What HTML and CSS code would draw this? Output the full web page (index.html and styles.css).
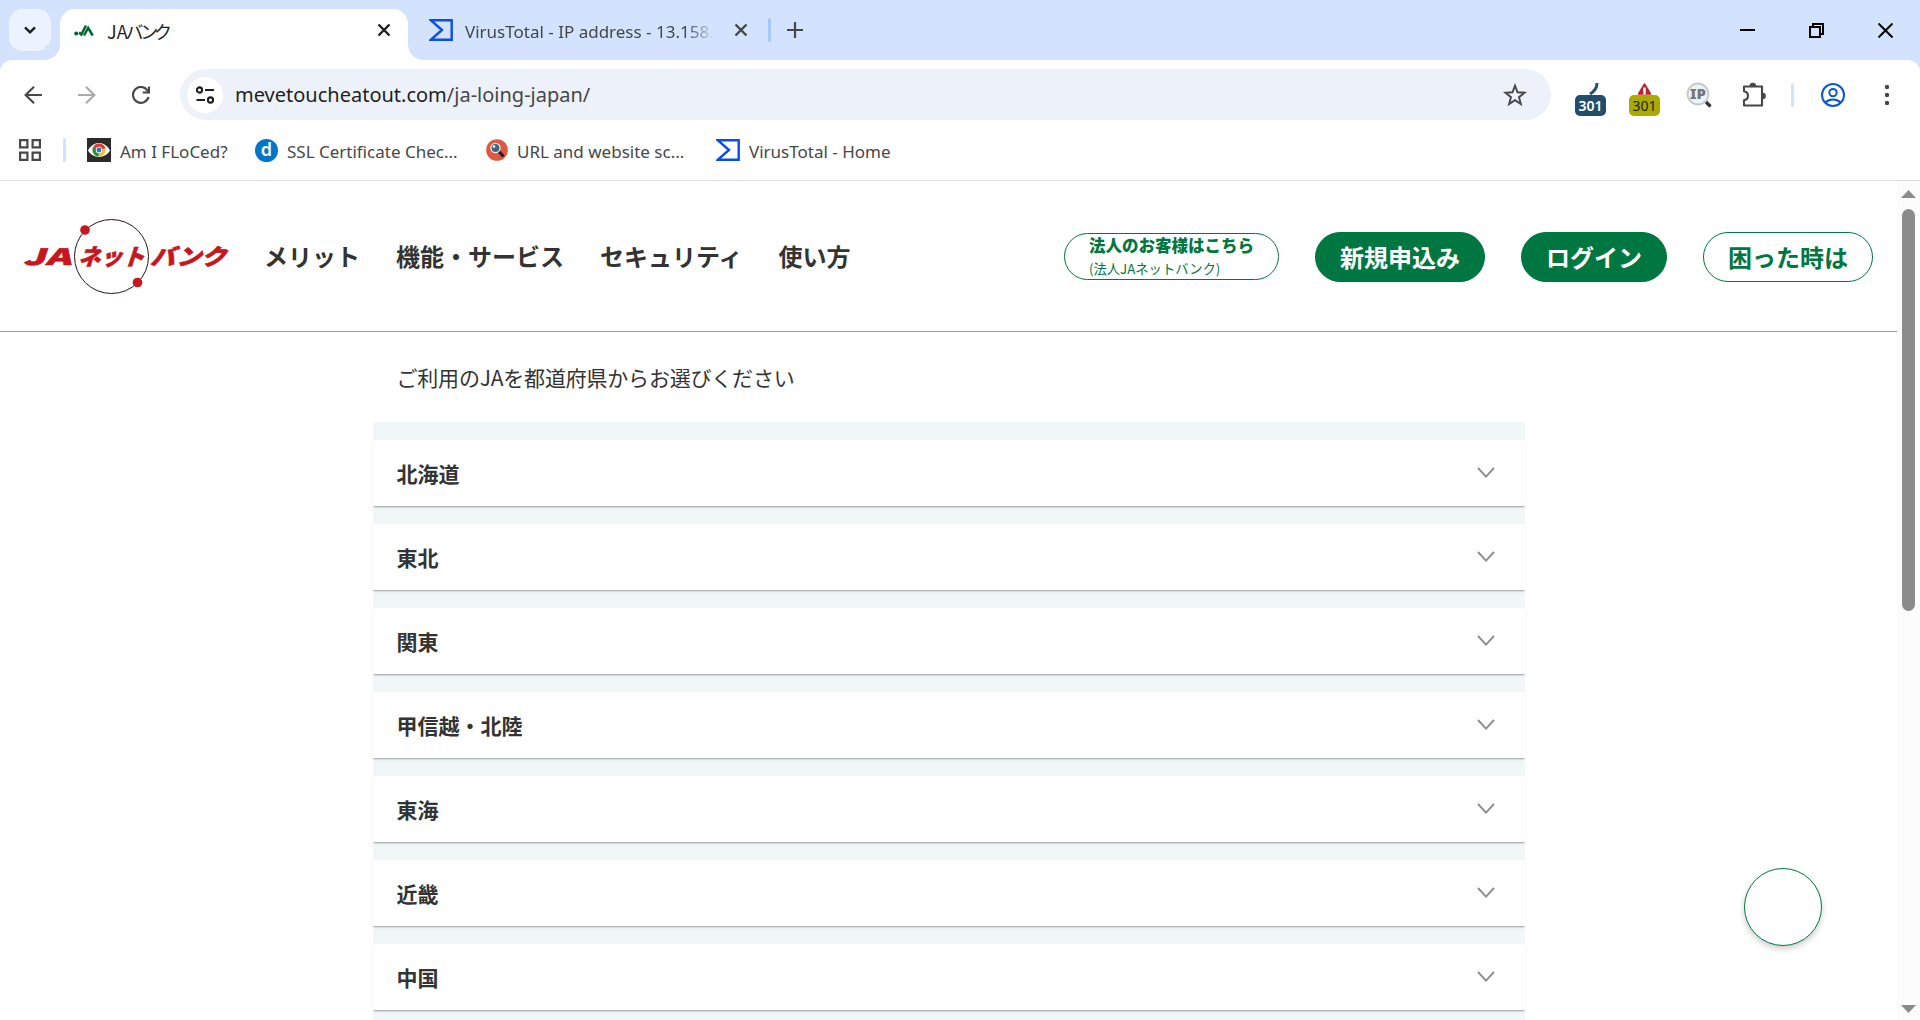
FILE: index.html
```html
<!DOCTYPE html>
<html lang="ja">
<head>
    <meta charset="UTF-8">
    <meta name="viewport" content="width=device-width, initial-scale=1.0">
    <title>JAバンク</title>
    <link rel="stylesheet" href="styles.css">
</head>
<body>
    <!-- icons used more than once -->
    <svg class="defs" width="0" height="0">
        <symbol id="vt" viewBox="0 0 24 22">
            <path d="M2 1.3h20.7v19.4H2L13 11z" fill="none" stroke="#0b4dea" stroke-width="2.4"/>
        </symbol>
        <symbol id="chevron" viewBox="0 0 18 11">
            <path d="M1 1l8 8.6L17 1" fill="none" stroke="#8e8e8e" stroke-width="1.9"/>
        </symbol>
    </svg>

    <div class="tabstrip">
        <div class="tab-search">
            <svg width="12" height="8" viewBox="0 0 12 8"><path d="M1 1.3l5 5 5-5" fill="none" stroke="#1f1f1f" stroke-width="2.4"/></svg>
        </div>
        <div class="tab active">
            <svg class="favicon-ja" width="20" height="14" viewBox="0 0 20 14">
                <circle cx="2.2" cy="10.5" r="2" fill="#00662f"/>
                <path d="M5 9.5l2.3 2L12 2.5M10 12.5L14.2 5l4.5 7.5" fill="none" stroke="#00662f" stroke-width="2.5"/>
            </svg>
            <span class="tab-title title-ja">JA<span class="kana">バンク</span></span>
            <svg class="tab-close" width="14" height="14" viewBox="0 0 14 14"><path d="M1.5 1.5l11 11m0-11l-11 11" stroke="#1f1f1f" stroke-width="2.4"/></svg>
        </div>
        <div class="tab">
            <svg class="favicon-vt" width="24" height="22"><use href="#vt"/></svg>
            <span class="tab-title title-vt">VirusTotal - IP address - 13.158.</span>
            <svg class="tab-close" width="14" height="14" viewBox="0 0 14 14"><path d="M1.5 1.5l11 11m0-11l-11 11" stroke="#444746" stroke-width="2.4"/></svg>
        </div>
        <div class="divider tab-divider"></div>
        <svg class="new-tab" width="16" height="16" viewBox="0 0 16 16"><path d="M8 0v16M0 8h16" stroke="#444746" stroke-width="2.2"/></svg>
        <div class="window-controls">
            <svg width="15" height="15" viewBox="0 0 15 15"><path d="M0 7h15" stroke="#000" stroke-width="2"/></svg>
            <svg width="15" height="15" viewBox="0 0 15 15"><path d="M1 4h10v10H1zM4 4V1h10v10h-3" fill="none" stroke="#000" stroke-width="2"/></svg>
            <svg width="15" height="15" viewBox="0 0 15 15"><path d="M.5 .5l14 14m0-14l-14 14" stroke="#000" stroke-width="2"/></svg>
        </div>
    </div>

    <div class="toolbar">
        <svg class="back" width="18" height="18" viewBox="0 0 18 18"><path d="M18 9H2M10 .8L1.6 9l8.4 8.2" fill="none" stroke="#474747" stroke-width="2.1"/></svg>
        <svg class="forward" width="18" height="18" viewBox="0 0 18 18"><path d="M0 9h16M8 .8L16.4 9 8 17.2" fill="none" stroke="#aaa" stroke-width="2.1"/></svg>
        <svg class="reload" width="18" height="18" viewBox="0 0 18 18"><path d="M16.5 11A7.9 7.9 0 1 1 15.5 4.5L17 6.5M17 .5v6h-6.3" fill="none" stroke="#474747" stroke-width="2.2"/></svg>
        <div class="omnibox">
            <div class="site-info">
                <svg width="20" height="18" viewBox="0 0 20 18" fill="none" stroke="#1f1f1f" stroke-width="2.1"><circle cx="4.5" cy="4" r="2.6"/><path d="M10 4h9M1.500 14h8.500"/><circle cx="15.5" cy="14" r="2.6"/></svg>
            </div>
            <span class="url">mevetoucheatout.com<span class="path">/ja-loing-japan/</span></span>
            <svg class="star" width="24" height="24" viewBox="0 0 24 24"><path d="M12 2.700l2.500 6.600 7 .4-5.500 4.500 1.900 6.900-5.900-3.900-5.900 3.900 1.900-6.900L2.500 9.700l7-.4z" fill="none" stroke="#474747" stroke-width="1.9"/></svg>
        </div>
        <div class="ext ext-blue">
            <svg width="31" height="13" viewBox="0 0 31 13"><path d="M22 1c0 5-2 8-7 11" fill="none" stroke="#27506b" stroke-width="3"/></svg>
            <span>301</span>
        </div>
        <div class="ext ext-olive">
            <svg width="31" height="13" viewBox="0 0 31 13"><path d="M15.5 2L9.5 12h12z" fill="#c4202f" stroke="#c4202f" stroke-width="1.5" stroke-linejoin="round"/><path d="M15.5 5.5v7" stroke="#fff" stroke-width="2.4"/></svg>
            <span>301</span>
        </div>
        <svg class="ext-ip" width="26" height="26" viewBox="0 0 26 26">
            <circle cx="12" cy="12" r="10.5" fill="#eef3f5" stroke="#c0c9cd" stroke-width="1.8"/>
            <path d="M20 20l4.500 4.500" stroke="#333" stroke-width="3.2"/>
            <text x="4" y="17" class="ip-text" textLength="16" lengthAdjust="spacingAndGlyphs">IP</text>
        </svg>
        <svg class="puzzle" width="26" height="26" viewBox="0 0 26 26">
            <path d="M3 4.500h18v19H3v-5.200c5.300-1 5.300-8.100 0-9.100z" fill="none" stroke="#474747" stroke-width="2.1" stroke-linejoin="round"/>
            <path d="M8.500 4a3.300 3.300 0 0 1 6.600 0zM21.500 10.700a3.300 3.300 0 0 1 0 6.600z" fill="#474747"/>
        </svg>
        <div class="divider toolbar-divider"></div>
        <svg class="profile" width="24" height="24" viewBox="0 0 24 24" fill="none" stroke="#0b57d0" stroke-width="2"><circle cx="12" cy="12" r="11"/><circle cx="12" cy="9.6" r="3.7"/><path d="M4.500 19.500c4-4 11-4 15 0"/></svg>
        <svg class="menu" width="6" height="22" viewBox="0 0 6 22" fill="#474747"><circle cx="3" cy="3" r="2.2"/><circle cx="3" cy="11" r="2.2"/><circle cx="3" cy="19" r="2.2"/></svg>
    </div>

    <div class="bookmarks">
        <svg class="apps" width="22" height="22" viewBox="0 0 22 22" fill="none" stroke="#474747" stroke-width="2.2"><path d="M1.100 1.100h7.300v7.300H1.100zM13.600 1.100h7.300v7.300h-7.300zM1.100 13.600h7.300v7.300H1.100zM13.600 13.600h7.300v7.300h-7.300z"/></svg>
        <div class="divider bookmark-divider"></div>
        <div class="bookmark floc">
            <svg width="24" height="24" viewBox="0 0 24 24">
                <rect width="24" height="24" fill="#2b2b2b"/>
                <path d="M1 12.500C6 2.500 18 2.500 23 12.500 18 21 6 21 1 12.500z" fill="#fff"/>
                <circle cx="12" cy="12" r="6.5" fill="#fbc116"/>
                <path d="M12 12L6.400 8.700a6.500 6.500 0 0 1 11.900 1.500z" fill="#e33b2e"/>
                <path d="M12 12L6.400 8.700a6.500 6.500 0 0 0 5.100 9.800z" fill="#229342"/>
                <circle cx="12" cy="12" r="3.2" fill="#fff"/><circle cx="12" cy="12" r="2.4" fill="#1a73e8"/>
            </svg>
            <span>Am I FLoCed?</span>
        </div>
        <div class="bookmark ssl">
            <div class="icon-d">d</div>
            <span>SSL Certificate Chec...</span>
        </div>
        <div class="bookmark scan">
            <svg width="22" height="22" viewBox="0 0 22 22"><circle cx="11" cy="11" r="10.8" fill="#e2573f"/><path d="M12.500 12l5 5.500" stroke="#222" stroke-width="3"/><circle cx="9.5" cy="9" r="4.6" fill="#3f6480" stroke="#dfe9ee" stroke-width="1.4"/><circle cx="8" cy="7.5" r="1.3" fill="#fff"/></svg>
            <span>URL and website sc...</span>
        </div>
        <div class="bookmark vthome">
            <svg width="24" height="22"><use href="#vt"/></svg>
            <span>VirusTotal - Home</span>
        </div>
    </div>

    <div class="viewport">
        <div class="page">
            <header>
                <svg class="logo" width="205" height="76" viewBox="0 0 205 76">
                    <circle cx="87.5" cy="38.5" r="37" fill="none" stroke="#231815" stroke-width="1"/>
                    <circle cx="61" cy="12" r="4.8" fill="#c7161d"/>
                    <circle cx="113.5" cy="64.5" r="4.8" fill="#c7161d"/>
                    <g class="logo-text" transform="translate(0 46.5) skewX(-18)">
                        <text x="-1" y="0" textLength="48" lengthAdjust="spacingAndGlyphs">JA</text>
                        <text x="54" y="0" textLength="66" lengthAdjust="spacingAndGlyphs">ネット</text>
                        <text x="126" y="0" textLength="76" lengthAdjust="spacingAndGlyphs">バンク</text>
                    </g>
                </svg>
                <nav>
                    <a>メリット</a>
                    <a>機能・サービス</a>
                    <a>セキュリティ</a>
                    <a>使い方</a>
                </nav>
                <div class="header-buttons">
                    <a class="btn corporate"><b>法人のお客様はこちら</b><span>(法人JAネットバンク)</span></a>
                    <a class="btn filled">新規申込み</a>
                    <a class="btn filled">ログイン</a>
                    <a class="btn">困った時は</a>
                </div>
            </header>
            <main>
                <p class="lead">ご利用のJAを都道府県からお選びください</p>
                <div class="regions">
                    <div class="region">北海道<svg width="18" height="11"><use href="#chevron"/></svg></div>
                    <div class="region">東北<svg width="18" height="11"><use href="#chevron"/></svg></div>
                    <div class="region">関東<svg width="18" height="11"><use href="#chevron"/></svg></div>
                    <div class="region">甲信越・北陸<svg width="18" height="11"><use href="#chevron"/></svg></div>
                    <div class="region">東海<svg width="18" height="11"><use href="#chevron"/></svg></div>
                    <div class="region">近畿<svg width="18" height="11"><use href="#chevron"/></svg></div>
                    <div class="region">中国<svg width="18" height="11"><use href="#chevron"/></svg></div>
                </div>
            </main>
            <div class="page-top"></div>
        </div>
        <div class="scrollbar">
            <svg width="15" height="8" viewBox="0 0 15 8"><path d="M7.500 0L15 8H0z" fill="#8b8b8b"/></svg>
            <div class="thumb"></div>
            <svg class="down" width="15" height="8" viewBox="0 0 15 8"><path d="M0 0h15L7.500 8z" fill="#8b8b8b"/></svg>
        </div>
    </div>
</body>
</html>
```
FILE: styles.css
```css
* {
    box-sizing: border-box;
}

body {
    margin: 0;
    height: 1020px;
    overflow: hidden;
    display: flex;
    flex-direction: column;
    background: #d3e3fd;
    font-family: "Noto Sans", "Noto Sans CJK JP", sans-serif;
}

svg {
    display: block;
    flex: none;
}

.defs {
    position: absolute;
}

/* browser tabs */
.tabstrip {
    display: flex;
    align-items: center;
    height: 60px;
    flex: none;
}

.tab-search {
    width: 42px;
    height: 42px;
    margin: 0 9px;
    border-radius: 14px;
    background: #ecf3fe;
    display: flex;
    align-items: center;
    justify-content: center;
}

.tab {
    display: flex;
    align-items: center;
    height: 60px;
}

.tab.active {
    position: relative;
    width: 348px;
    height: 51px;
    margin-top: 9px;
    padding-bottom: 9px;
    background: #fff;
    border-radius: 15px 15px 0 0;
}

.tab.active::before,
.tab.active::after {
    content: "";
    position: absolute;
    bottom: 0;
    width: 15px;
    height: 15px;
}

.tab.active::before {
    left: -15px;
    background: radial-gradient(circle at 0 0, #d3e3fd 14.5px, #fff 15px);
}

.tab.active::after {
    right: -15px;
    background: radial-gradient(circle at 100% 0, #d3e3fd 14.5px, #fff 15px);
}

.favicon-ja {
    margin-left: 14px;
}

.favicon-vt {
    margin-left: 21px;
}

.tab-title {
    padding-top: 2px;
    font-size: 17px;
    white-space: nowrap;
    overflow: hidden;
    color: #444746;
}

.title-ja {
    width: 270px;
    margin-left: 13px;
    padding-top: 1px;
    color: #1f1f1f;
    font-family: "Noto Sans CJK JP", sans-serif;
    font-size: 18px;
}

.title-ja .kana {
    letter-spacing: -4.2px;
    margin-left: -2px;
}

.title-vt {
    width: 250px;
    margin-left: 12px;
    margin-right: 19px;
    letter-spacing: 0;
    -webkit-mask-image: linear-gradient(90deg, #000 88%, transparent);
    mask-image: linear-gradient(90deg, #000 88%, transparent);
}

.divider {
    width: 3px;
    height: 24px;
    border-radius: 2px;
    background: #d3e3fd;
    flex: none;
}

.tab-divider {
    margin: 0 16px 0 20px;
    background: #a8c7fa;
}

.window-controls {
    display: flex;
    gap: 54px;
    margin-left: auto;
    margin-right: 27px;
}

/* address bar */
.toolbar {
    display: flex;
    align-items: center;
    height: 60px;
    padding-top: 9px;
    flex: none;
    background: #fff;
    border-radius: 12px 12px 0 0;
}

.back {
    margin-left: 24px;
}

.forward {
    margin-left: 36px;
}

.reload {
    margin-left: 36px;
}

.omnibox {
    display: flex;
    align-items: center;
    width: 1371px;
    height: 51px;
    margin-left: 30px;
    padding: 0 24px 0 7px;
    border-radius: 26px;
    background: #ecf1fa;
}

.site-info {
    width: 36px;
    height: 36px;
    border-radius: 50%;
    background: #fff;
    display: flex;
    align-items: center;
    justify-content: center;
}

.url {
    margin-left: 12px;
    font-size: 20px;
    color: #1f1f1f;
    white-space: nowrap;
}

.url .path {
    color: #474747;
}

.star {
    margin-left: auto;
}

.ext {
    width: 31px;
    height: 34px;
    margin-top: 8px;
}

.ext span {
    display: block;
    height: 21px;
    border-radius: 5px;
    font-size: 14px;
    line-height: 22px;
    text-align: center;
}

.ext-blue {
    margin-left: 24px;
}

.ext-blue span {
    background: #224e6b;
    color: #fff;
    font-weight: 600;
}

.ext-olive {
    margin-left: 23px;
}

.ext-olive span {
    background: #a9ab00;
    color: #222;
}

.ext-ip {
    margin-left: 26px;
}

.ip-text {
    font: 900 14px "Noto Sans", sans-serif;
    fill: #777;
}

.puzzle {
    margin-left: 29px;
}

.toolbar-divider {
    margin-left: 24px;
}

.profile {
    margin-left: 27px;
}

.menu {
    margin-left: 39px;
}

/* bookmarks */
.bookmarks {
    display: flex;
    align-items: center;
    height: 61px;
    flex: none;
    background: #fff;
    border-bottom: 1px solid #dfdfdf;
}

.apps {
    margin-left: 19px;
}

.bookmark-divider {
    margin: 0 21px 0 22px;
}

.bookmark {
    display: flex;
    align-items: center;
    gap: 9px;
    font-size: 17px;
    color: #474747;
    white-space: nowrap;
}

.bookmark span {
    padding-top: 2px;
}

.floc {
    width: 168px;
}

.ssl {
    width: 231px;
}

.scan {
    width: 230px;
}

.icon-d {
    width: 23px;
    height: 23px;
    border-radius: 50%;
    background: #0076c8;
    color: #fff;
    font-size: 18px;
    font-weight: 600;
    line-height: 21px;
    text-align: center;
}

/* page */
.viewport {
    display: flex;
    flex: 1;
    min-height: 0;
    background: #fff;
}

.page {
    flex: 1;
    overflow: hidden;
    color: #333;
    font-family: "Noto Sans CJK JP", sans-serif;
}

header {
    display: flex;
    align-items: center;
    height: 151px;
    padding: 0 24px;
    border-bottom: 1px solid #999;
}

.logo {
    overflow: visible;
}

.logo-text {
    font: 900 22.5px "Noto Sans CJK JP", sans-serif;
    fill: #c7161d;
    stroke: #c7161d;
    stroke-width: 0.6px;
}

nav {
    display: flex;
    gap: 36px;
    margin-left: 35px;
    padding-bottom: 2px;
    font-size: 24px;
    font-weight: bold;
}

.header-buttons {
    display: flex;
    align-items: center;
    gap: 36px;
    margin-left: auto;
    margin-top: 2px;
}

.btn {
    height: 50px;
    padding: 0 24px;
    border: 1px solid #007741;
    border-radius: 25px;
    background: #fff;
    color: #007741;
    font-size: 24px;
    font-weight: bold;
    line-height: 48px;
}

.btn.filled {
    background: #007741;
    color: #fff;
}

.btn.corporate {
    display: flex;
    flex-direction: column;
    justify-content: center;
    width: 215px;
    height: 47px;
    margin-bottom: 1px;
    font-size: 16.5px;
    line-height: 24px;
}

.btn.corporate span {
    padding-top: 1px;
    font-size: 13.3px;
    font-weight: normal;
    line-height: 22px;
}

main {
    width: 1152px;
    margin: 0 auto;
}

.lead {
    margin: 0;
    padding: 30px 24px;
    font-size: 21px;
    letter-spacing: -0.2px;
    line-height: 30px;
}

.regions {
    display: flex;
    flex-direction: column;
    gap: 18px;
    height: 640px;
    padding-top: 18px;
    background: #f1f7f7;
}

.region {
    display: flex;
    align-items: center;
    justify-content: space-between;
    flex: none;
    height: 66px;
    padding: 0 30px 1px 24px;
    background: #fff;
    box-shadow: 0 2px 2px -1px rgba(0, 0, 0, 0.3), 0 1px 1px rgba(0, 0, 0, 0.08);
    font-size: 21px;
    font-weight: bold;
}

.page-top {
    position: fixed;
    left: 1744px;
    top: 868px;
    width: 78px;
    height: 78px;
    border: 1px solid #007741;
    border-radius: 50%;
    background: #fff;
    box-shadow: 0 3px 6px rgba(0, 0, 0, 0.2);
}

/* scrollbar */
.scrollbar {
    display: flex;
    flex-direction: column;
    align-items: center;
    width: 23px;
    padding: 9px 5px 7px 4px;
    background: #fcfcfc;
}

.thumb {
    width: 13px;
    height: 402px;
    margin-top: 11px;
    border-radius: 7px;
    background: #8b8b8b;
}

.down {
    margin-top: auto;
}
```
